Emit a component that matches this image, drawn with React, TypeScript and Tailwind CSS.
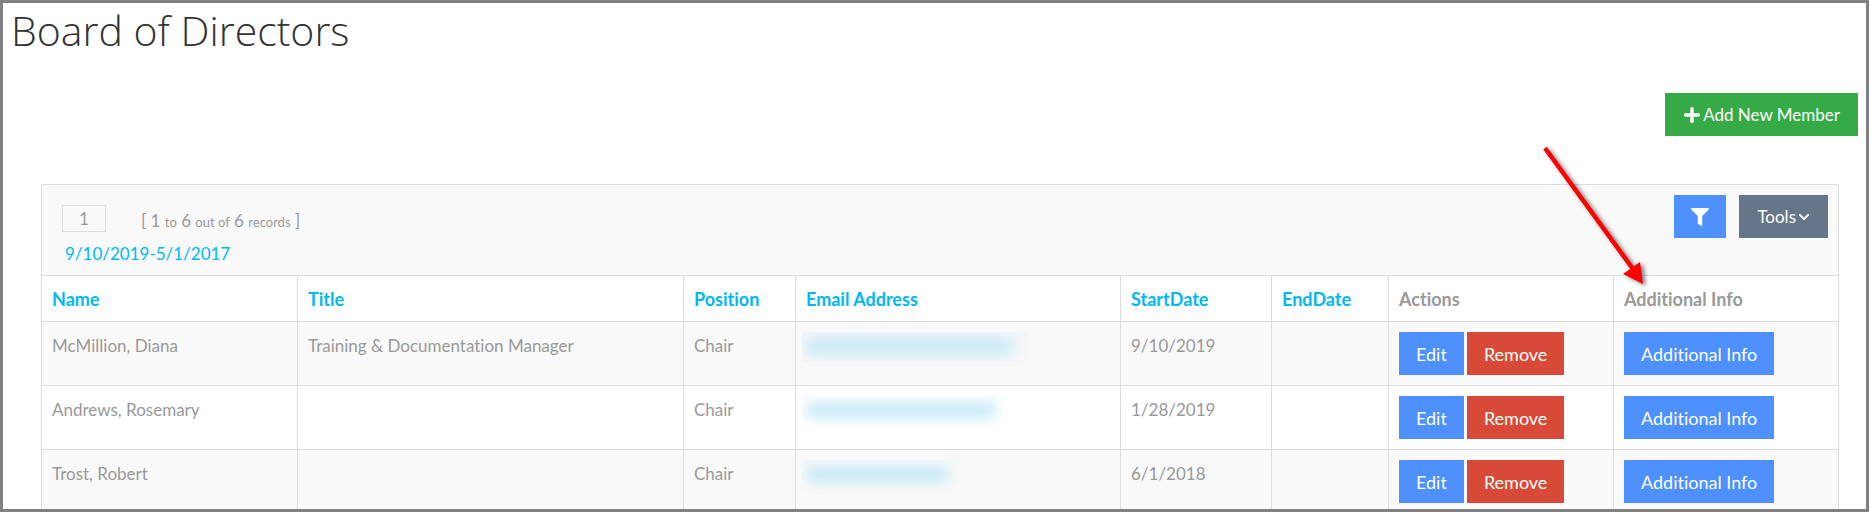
import { FaChevronDown, FaFilter, FaPlus } from "react-icons/fa";

interface Member {
  name: string;
  title: string;
  position: string;
  startDate: string;
  endDate: string;
  emailBox: string;
  emailBar: string;
}

const members: Member[] = [
  {
    name: "McMillion, Diana",
    title: "Training & Documentation Manager",
    position: "Chair",
    startDate: "9/10/2019",
    endDate: "",
    emailBox: "w-[226px] bg-[#f6f7f8]",
    emailBar: "w-[206px]",
  },
  {
    name: "Andrews, Rosemary",
    title: "",
    position: "Chair",
    startDate: "1/28/2019",
    endDate: "",
    emailBox: "w-[226px]",
    emailBar: "w-[190px]",
  },
  {
    name: "Trost, Robert",
    title: "",
    position: "Chair",
    startDate: "6/1/2018",
    endDate: "",
    emailBox: "w-[166px]",
    emailBar: "w-[142px]",
  },
];

const columns = [
  { label: "Name", width: "w-[256px]", sortable: true },
  { label: "Title", width: "w-[386px]", sortable: true },
  { label: "Position", width: "w-[112px]", sortable: true },
  { label: "Email Address", width: "w-[325px]", sortable: true },
  { label: "StartDate", width: "w-[151px]", sortable: true },
  { label: "EndDate", width: "w-[117px]", sortable: true },
  { label: "Actions", width: "w-[225px]", sortable: false },
  { label: "Additional Info", width: "w-[225px]", sortable: false },
];

const button = "h-[43px] leading-6 text-white whitespace-nowrap";
const rowButton = `${button} px-[17px] text-lg`;
const barButton = `${button} flex items-center gap-0.5 px-[18px]`;
const cell = "border border-[#ddd] px-2.5 py-2.5 align-top leading-7";

function HiddenEmail({ box, bar }: { box: string; bar: string }) {
  return (
    <div className={`-ml-1 h-[30px] overflow-hidden px-1 py-1.5 ${box}`}>
      <div className={`h-4 bg-[#c4e9f6] blur-[7px] ${bar}`} />
    </div>
  );
}

function Pointer() {
  return (
    <svg
      className="pointer-events-none absolute top-[-42px] right-[180px] h-[150px] w-[120px] drop-shadow-[3px_2px_2px_rgba(0,0,0,0.5)]"
      viewBox="0 0 120 150"
      aria-hidden="true"
    >
      <path d="M6 6 L94 127" stroke="#f00" strokeWidth="4.5" />
      <path d="M104 142 L84 132 L101 120 Z" fill="#f00" />
    </svg>
  );
}

export default function App() {
  return (
    <div className="h-screen overflow-hidden border-3 border-[#808080] bg-white font-['Lato',sans-serif] text-[17px] leading-6 text-[#999] [font-variant-ligatures:none]">
      <header className="px-2">
        <h1 className="font-['Open_Sans',sans-serif] text-[41px] leading-[54px] font-light text-[#333]">
          Board of Directors
        </h1>
        <div className="mt-9 flex justify-end">
          <button className={`bg-[#35aa47] ${barButton}`}>
            <FaPlus className="size-[18px]" />
            Add New Member
          </button>
        </div>
      </header>

      <section className="relative mt-12 mr-[27px] ml-[38px]">
        <div className="flex h-[91px] justify-between border border-b-0 border-[#ddd] bg-[#f9f9f9] px-2.5 py-2.5">
          <div className="pt-2.5 pl-2.5">
            <div className="flex items-start">
              <input
                type="text"
                defaultValue="1"
                aria-label="Page"
                className="h-[27px] w-11 border border-[#ddd] text-center"
              />
              <p className="ml-[35px] pt-1">
                [ 1 <span className="text-[13px]">to</span> 6 <span className="text-[13px]">out of</span> 6{" "}
                <span className="text-[13px]">records</span> ]
              </p>
            </div>
            <a href="#range" className="ml-[3px] block pt-2 text-[#00b9f2]">
              9/10/2019-5/1/2017
            </a>
          </div>
          <div className="flex gap-[13px]">
            <button aria-label="Filter" className={`bg-[#4d90fe] ${rowButton}`}>
              <FaFilter className="size-[18px]" />
            </button>
            <button className={`bg-[#657688] ${barButton}`}>
              Tools
              <FaChevronDown className="size-3" />
            </button>
          </div>
        </div>

        <table className="w-full table-fixed border-collapse">
          <thead>
            <tr>
              {columns.map((col) => (
                <th
                  key={col.label}
                  className={`h-[46px] border border-[#ddd] px-2.5 text-left text-lg leading-6 font-bold ${col.width}`}
                >
                  {col.sortable ? (
                    <a href="#sort" className="text-[#00b9f2]">
                      {col.label}
                    </a>
                  ) : (
                    col.label
                  )}
                </th>
              ))}
            </tr>
          </thead>
          <tbody>
            {members.map((m) => (
              <tr key={m.name} className="odd:bg-[#f9f9f9]">
                <td className={cell}>{m.name}</td>
                <td className={cell}>{m.title}</td>
                <td className={cell}>{m.position}</td>
                <td className={cell}>
                  <HiddenEmail box={m.emailBox} bar={m.emailBar} />
                </td>
                <td className={cell}>{m.startDate}</td>
                <td className={cell}>{m.endDate}</td>
                <td className={cell}>
                  <div className="flex gap-[3px]">
                    <button className={`bg-[#4d90fe] ${rowButton}`}>Edit</button>
                    <button className={`bg-[#d84a38] ${rowButton}`}>Remove</button>
                  </div>
                </td>
                <td className={cell}>
                  <button className={`block bg-[#4d90fe] ${rowButton}`}>Additional Info</button>
                </td>
              </tr>
            ))}
          </tbody>
        </table>
        <Pointer />
      </section>
    </div>
  );
}
